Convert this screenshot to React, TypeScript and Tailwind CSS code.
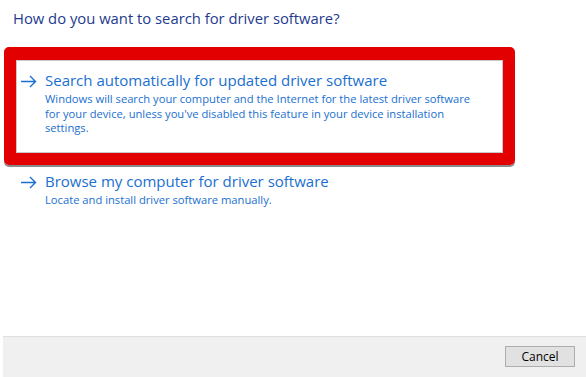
import React from 'react';

const font = { fontFamily: '"Open Sans", "Noto Sans", Arial, sans-serif' };

function Arrow() {
  return (
    <svg width="17" height="13" viewBox="0 0 17 13" className="shrink-0">
      <path d="M1 6.5 H15.5 M10 1 L15.5 6.5 L10 12" fill="none" stroke="#1a6fd0" strokeWidth="1.4" />
    </svg>
  );
}

interface OptionProps {
  title: string;
  desc: string;
  indent: string;
}

function Option({ title, desc, indent }: OptionProps) {
  return (
    <div className={`flex items-start gap-[8px] ${indent}`}>
      <div className="pt-[5px]">
        <Arrow />
      </div>
      <div className="flex flex-col">
        <span className="text-[15px] leading-[20px] text-[#1a6fd0]">{title}</span>
        <span className="mt-[2px] text-[11.2px] leading-[14.5px] text-[#1a6fd0] w-[428px]">{desc}</span>
      </div>
    </div>
  );
}

export default function App() {
  return (
    <div className="w-[586px] h-[377px] bg-white flex flex-col overflow-hidden" style={font}>
      <div className="flex-1 flex flex-col">
        <h1 className="pl-[13px] pt-[8px] text-[14.8px] leading-[20px] text-[#1e3a8e]">
          How do you want to search for driver software?
        </h1>

        <div className="ml-[4px] mt-[19px] w-[511px] h-[118px] rounded-[5px] border-[#e30000] border-t-[13px] border-l-[12px] border-r-[12px] border-b-[12px] shadow-[0_2px_0_#8a8a8a]">
          <div className="h-full border border-[#c8c8c8] pt-[9px]">
            <Option
              indent="pl-[3px]"
              title="Search automatically for updated driver software"
              desc="Windows will search your computer and the Internet for the latest driver software for your device, unless you've disabled this feature in your device installation settings."
            />
          </div>
        </div>

        <div className="mt-[6px]">
          <Option
            indent="pl-[20px]"
            title="Browse my computer for driver software"
            desc="Locate and install driver software manually."
          />
        </div>
      </div>

      <div className="ml-[3px] h-[41px] bg-[#f0f0f0] border-t border-[#dfdfdf] flex items-start justify-end pt-[9px] pr-[11px]">
        <button className="w-[70px] h-[21px] bg-[#e1e1e1] border border-[#adadad] text-[12px] leading-none text-black" style={font}>
          Cancel
        </button>
      </div>
    </div>
  );
}
